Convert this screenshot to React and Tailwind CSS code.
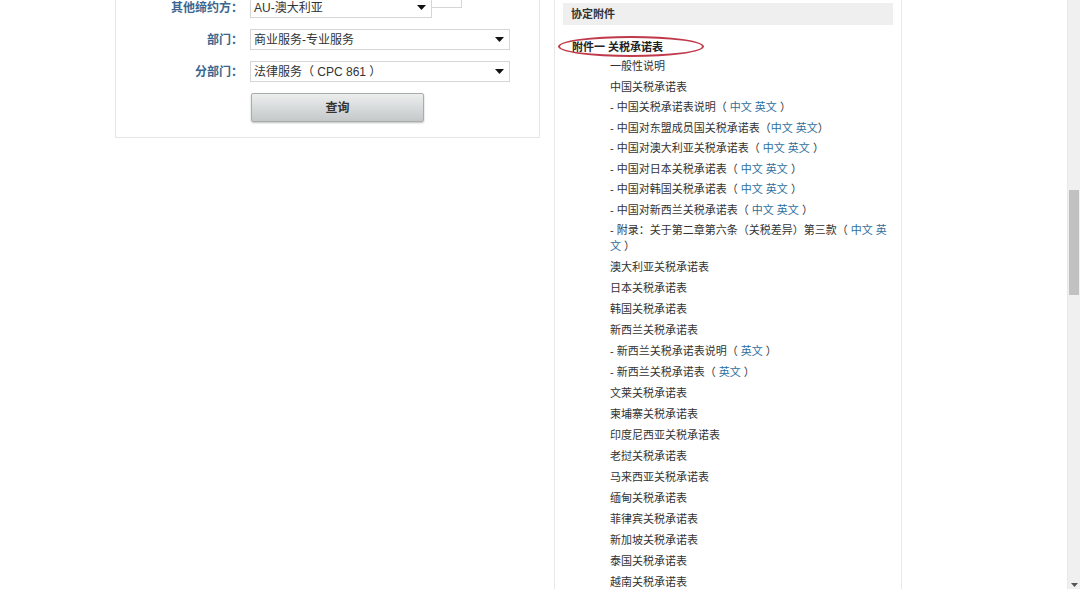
import React from 'react';

const items = [
  { t: '一般性说明' },
  { t: '中国关税承诺表' },
  { t: '- 中国关税承诺表说明（ ', links: ['中文', '英文'], end: ' ）' },
  { t: '- 中国对东盟成员国关税承诺表（', links: ['中文', '英文'], end: '）' },
  { t: '- 中国对澳大利亚关税承诺表（ ', links: ['中文', '英文'], end: ' ）' },
  { t: '- 中国对日本关税承诺表（ ', links: ['中文', '英文'], end: ' ）' },
  { t: '- 中国对韩国关税承诺表（ ', links: ['中文', '英文'], end: ' ）' },
  { t: '- 中国对新西兰关税承诺表（ ', links: ['中文', '英文'], end: ' ）' },
  { t: '- 附录：关于第二章第六条（关税差异）第三款（ ', links: ['中文', '英文'], end: ' ）' },
  { t: '澳大利亚关税承诺表' },
  { t: '日本关税承诺表' },
  { t: '韩国关税承诺表' },
  { t: '新西兰关税承诺表' },
  { t: '- 新西兰关税承诺表说明（ ', links: ['英文'], end: ' ）' },
  { t: '- 新西兰关税承诺表（ ', links: ['英文'], end: ' ）' },
  { t: '文莱关税承诺表' },
  { t: '柬埔寨关税承诺表' },
  { t: '印度尼西亚关税承诺表' },
  { t: '老挝关税承诺表' },
  { t: '马来西亚关税承诺表' },
  { t: '缅甸关税承诺表' },
  { t: '菲律宾关税承诺表' },
  { t: '新加坡关税承诺表' },
  { t: '泰国关税承诺表' },
  { t: '越南关税承诺表' },
];

function Arrow() {
  return (
    <svg width="9" height="5" viewBox="0 0 9 5" className="shrink-0">
      <path d="M0 0 L9 0 L4.5 5 Z" fill="#111" />
    </svg>
  );
}

function Select({ value, width }) {
  return (
    <div className={`${width} h-[21px] border border-[#d6d6d6] bg-white flex items-center justify-between pl-[3px] pr-[5px] text-[12px] text-[#333]`}>
      <span>{value}</span>
      <Arrow />
    </div>
  );
}

function Row({ label, children }) {
  return (
    <div className="flex items-center">
      <div className="w-[128px] text-right text-[12px] text-[#3a668f] font-bold pr-[1px]">{label}</div>
      <div className="ml-[6px] flex items-start">{children}</div>
    </div>
  );
}

export default function App() {
  return (
    <div className="w-[1080px] h-[589px] overflow-hidden flex bg-white font-['Liberation_Sans','Noto_Sans_CJK_SC',sans-serif]">
      <div className="flex-1 flex items-start pl-[115px] -mt-[20px]">
        {/* 左侧查询 */}
        <div className="w-[425px] border border-[#e6e6e6] pt-[16px] pb-[15px] flex flex-col gap-[11px]">
          <Row label="其他缔约方：">
            <Select value="AU-澳大利亚" width="w-[182px]" />
            <div className="w-[31px] h-[11px] border-r border-b border-[#d6d6d6] -ml-px"></div>
          </Row>
          <Row label="部门：">
            <Select value="商业服务-专业服务" width="w-[260px]" />
          </Row>
          <Row label="分部门：">
            <Select value="法律服务（ CPC 861 ）" width="w-[260px]" />
          </Row>
          <div className="flex pl-[135px]">
            <button className="w-[173px] h-[29px] rounded-[2px] border border-[#a9adae] bg-gradient-to-b from-[#eceeee] to-[#c4c8c9] shadow-[0_1px_2px_rgba(0,0,0,0.25)] text-[12px] font-bold text-[#333]">
              查询
            </button>
          </div>
        </div>

        {/* 右侧附件 */}
        <div className="ml-[14px] w-[348px] border-x border-[#e8e8e8] pt-[23px] px-[8px] pb-[40px]">
          <div className="h-[22px] bg-[#efefef] flex items-center pl-[8px] text-[11px] font-bold text-[#333]">协定附件</div>
          <div className="relative mt-[14px] pl-[9px] text-[11px] font-bold text-[#222] leading-[16px]">
            附件一 关税承诺表
            <div className="absolute left-[-5px] top-[-3px] w-[146px] h-[21px] rounded-[50%] border-2 border-[#c0394a]"></div>
          </div>
          <div className="mt-[3px] pl-[47px] text-[11px] text-[#333]">
            {items.map((it, i) => (
              <div key={i} className={`leading-[16px] ${i < 8 ? 'mb-[4.5px]' : 'mb-[5px]'}`}>
                {it.t}
                {it.links && it.links.map((l, j) => (
                  <span key={j} className="text-[#2e6f9e]">{j > 0 ? ' ' : ''}{l}</span>
                ))}
                {it.end}
              </div>
            ))}
          </div>
        </div>
      </div>

      {/* 滚动条 */}
      <div className="w-[13px] h-full bg-[#f0f0f0] border-l border-[#e8e8e8] flex flex-col items-center">
        <div className="mt-[190px] w-[10px] h-[105px] bg-[#c1c1c1]"></div>
        <div className="mt-auto mb-[2px]">
          <svg width="7" height="4" viewBox="0 0 7 4"><path d="M0 0 L7 0 L3.5 4 Z" fill="#555" /></svg>
        </div>
      </div>
    </div>
  );
}
